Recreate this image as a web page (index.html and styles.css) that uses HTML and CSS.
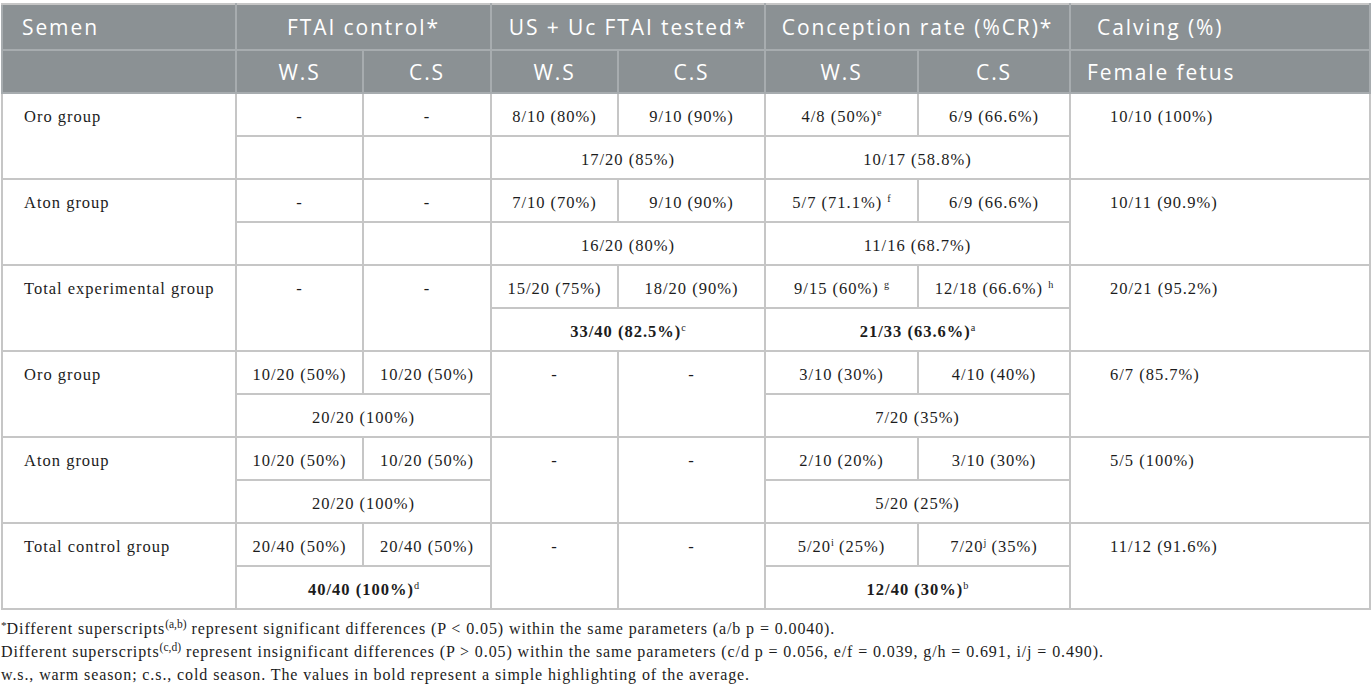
FILE: index.html
```html
<!DOCTYPE html>
<html>
<head>
    <meta charset="utf-8">
    <title>Table</title>
    <link rel="stylesheet" href="styles.css">
</head>
<body>
    <table class="data">
        <colgroup>
            <col class="c-name">
            <col class="c-ftw"><col class="c-ftc">
            <col class="c-usw"><col class="c-usc">
            <col class="c-crw"><col class="c-crc">
            <col class="c-calv">
        </colgroup>
        <thead>
            <tr class="head1">
                <th class="left">Semen</th>
                <th colspan="2">FTAI control*</th>
                <th colspan="2">US + Uc FTAI tested*</th>
                <th colspan="2">Conception rate (%CR)*</th>
                <th class="left calv-h">Calving (%)</th>
            </tr>
            <tr class="head2">
                <th></th>
                <th>W.S</th><th>C.S</th>
                <th>W.S</th><th>C.S</th>
                <th>W.S</th><th>C.S</th>
                <th class="left fem-h">Female fetus</th>
            </tr>
        </thead>
        <tbody>
            <!-- experimental -->
            <tr>
                <td rowspan="2" class="name">Oro group</td>
                <td>-</td><td>-</td>
                <td>8/10 (80%)</td><td>9/10 (90%)</td>
                <td>4/8 (50%)<sup>e</sup></td><td>6/9 (66.6%)</td>
                <td rowspan="2" class="calv">10/10 (100%)</td>
            </tr>
            <tr>
                <td></td><td></td>
                <td colspan="2">17/20 (85%)</td>
                <td colspan="2">10/17 (58.8%)</td>
            </tr>
            <tr>
                <td rowspan="2" class="name">Aton group</td>
                <td>-</td><td>-</td>
                <td>7/10 (70%)</td><td>9/10 (90%)</td>
                <td>5/7 (71.1%) <sup>f</sup></td><td>6/9 (66.6%)</td>
                <td rowspan="2" class="calv">10/11 (90.9%)</td>
            </tr>
            <tr>
                <td></td><td></td>
                <td colspan="2">16/20 (80%)</td>
                <td colspan="2">11/16 (68.7%)</td>
            </tr>
            <tr>
                <td rowspan="2" class="name">Total experimental group</td>
                <td rowspan="2">-</td><td rowspan="2">-</td>
                <td>15/20 (75%)</td><td>18/20 (90%)</td>
                <td>9/15 (60%) <sup>g</sup></td><td>12/18 (66.6%) <sup>h</sup></td>
                <td rowspan="2" class="calv">20/21 (95.2%)</td>
            </tr>
            <tr>
                <td colspan="2"><b>33/40 (82.5%)</b><sup>c</sup></td>
                <td colspan="2"><b>21/33 (63.6%)</b><sup>a</sup></td>
            </tr>
            <!-- control -->
            <tr>
                <td rowspan="2" class="name">Oro group</td>
                <td>10/20 (50%)</td><td>10/20 (50%)</td>
                <td rowspan="2">-</td><td rowspan="2">-</td>
                <td>3/10 (30%)</td><td>4/10 (40%)</td>
                <td rowspan="2" class="calv">6/7 (85.7%)</td>
            </tr>
            <tr>
                <td colspan="2">20/20 (100%)</td>
                <td colspan="2">7/20 (35%)</td>
            </tr>
            <tr>
                <td rowspan="2" class="name">Aton group</td>
                <td>10/20 (50%)</td><td>10/20 (50%)</td>
                <td rowspan="2">-</td><td rowspan="2">-</td>
                <td>2/10 (20%)</td><td>3/10 (30%)</td>
                <td rowspan="2" class="calv">5/5 (100%)</td>
            </tr>
            <tr>
                <td colspan="2">20/20 (100%)</td>
                <td colspan="2">5/20 (25%)</td>
            </tr>
            <tr>
                <td rowspan="2" class="name">Total control group</td>
                <td>20/40 (50%)</td><td>20/40 (50%)</td>
                <td rowspan="2">-</td><td rowspan="2">-</td>
                <td>5/20<sup>i</sup> (25%)</td><td>7/20<sup>j</sup> (35%)</td>
                <td rowspan="2" class="calv">11/12 (91.6%)</td>
            </tr>
            <tr>
                <td colspan="2"><b>40/40 (100%)</b><sup>d</sup></td>
                <td colspan="2"><b>12/40 (30%)</b><sup>b</sup></td>
            </tr>
        </tbody>
    </table>
    <div class="notes">
        <p><sup class="star">*</sup>Different superscripts<sup>(a,b)</sup> represent significant differences (P &lt; 0.05) within the same parameters (a/b p = 0.0040).</p>
        <p>Different superscripts<sup>(c,d)</sup> represent insignificant differences (P &gt; 0.05) within the same parameters (c/d p = 0.056, e/f = 0.039, g/h = 0.691, i/j = 0.490).</p>
        <p>w.s., warm season; c.s., cold season. The values in bold represent a simple highlighting of the average.</p>
    </div>
</body>
</html>
```

FILE: styles.css
```css
body
{
    margin: 0;
    padding: 3px 0 0 1px;
    font-family: "Liberation Serif", serif;
    color: #1c1c1c;
    background: #ffffff;
}

.data
{
    border-collapse: collapse;
    table-layout: fixed;
    width: 1368px;
    border: 2px solid #c6c6c6;
}

.c-name { width: 234px; }
.c-ftw  { width: 127px; }
.c-ftc  { width: 128px; }
.c-usw  { width: 127px; }
.c-usc  { width: 147px; }
.c-crw  { width: 153px; }
.c-crc  { width: 152px; }
.c-calv { width: 300px; }

th
{
    background-color: #8b9194;
    color: #ffffff;
    font-family: "Open Sans", sans-serif;
    font-weight: normal;
    font-size: 21px;
    letter-spacing: 1.9px;
    text-align: center;
    padding: 0;
    border: 2px solid #a7acaf;
    white-space: nowrap;
}

.head1 th
{
    height: 44px;
    line-height: 42px;
    border-top-color: #c6c6c6;
}

.head2 th
{
    height: 41px;
    line-height: 38px;
}

th.left
{
    text-align: left;
    padding-left: 19px;
}

th.calv-h
{
    padding-left: 26px;
}

th.fem-h
{
    padding-left: 16px;
}

td
{
    border: 2px solid #c6c6c6;
    font-size: 16.5px;
    letter-spacing: 1px;
    text-align: center;
    vertical-align: top;
    height: 37px;
    line-height: 37px;
    padding: 4px 0 0;
    white-space: nowrap;
}

td.name
{
    text-align: left;
    padding-left: 21px;
}

td.calv
{
    text-align: left;
    padding-left: 39px;
}

sup
{
    font-size: 0.62em;
    line-height: 0;
    vertical-align: 0.55em;
    letter-spacing: 0;
}

.notes
{
    margin-top: 7px;
    font-size: 16px;
    letter-spacing: 0.9px;
    line-height: 23px;
}

.notes p
{
    margin: 0;
}

.notes sup
{
    font-size: 0.72em;
    vertical-align: 0.5em;
}

.notes .star
{
    font-size: 0.7em;
    vertical-align: 0.45em;
}
```
